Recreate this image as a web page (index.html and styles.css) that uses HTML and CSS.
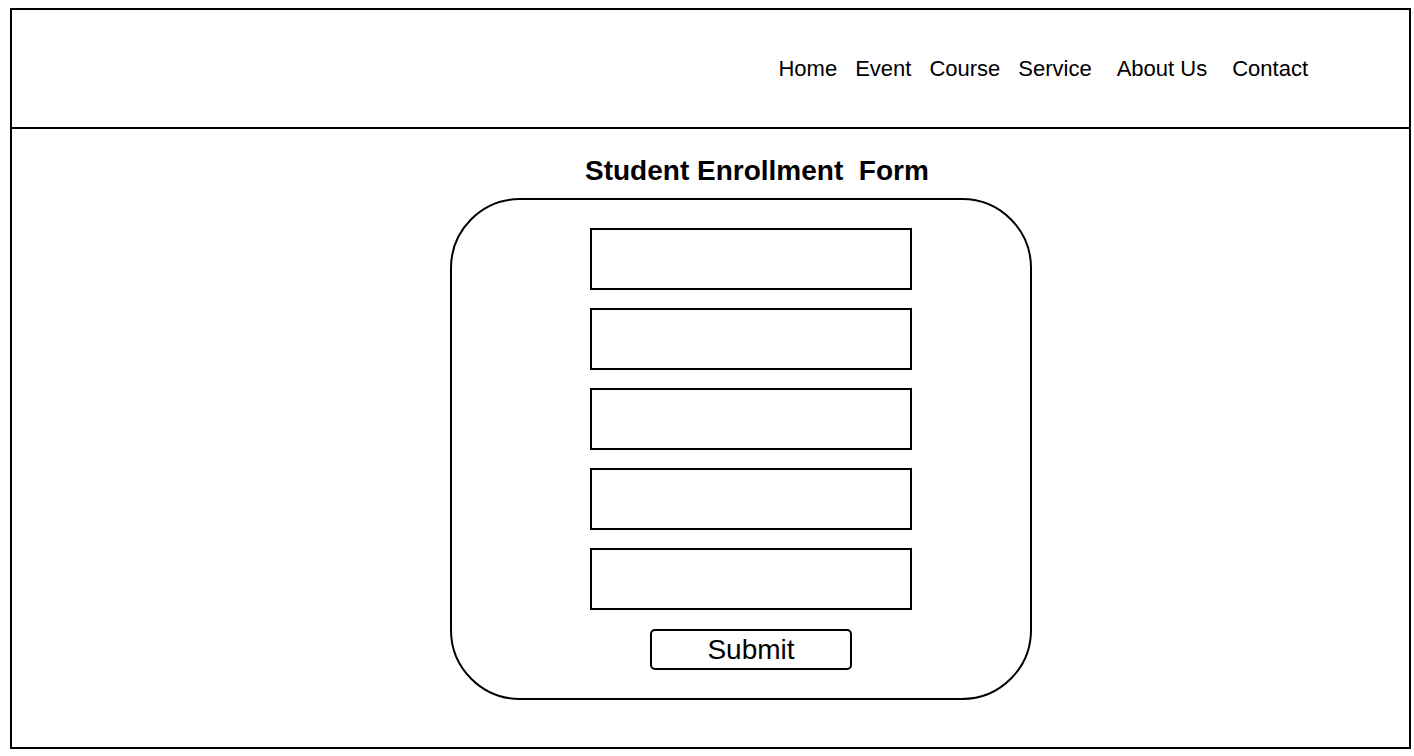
FILE: index.html
```html
<!DOCTYPE html>
<html lang="en">
<head>
<meta charset="utf-8">
<title>Student Enrollment Form</title>
<link rel="stylesheet" href="styles.css">
</head>
<body>
<div class="frame">
  <header class="header">
    <nav class="nav">
      <a class="nav-link" href="#">Home</a>
      <a class="nav-link" href="#">Event</a>
      <a class="nav-link" href="#">Course</a>
      <a class="nav-link" href="#">Service</a>
      <a class="nav-link wide" href="#">About Us</a>
      <a class="nav-link wide" href="#">Contact</a>
    </nav>
  </header>
  <main class="main">
    <h1 class="title">Student Enrollment&nbsp; Form</h1>
    <form class="card">
      <div class="fields">
        <input class="field" type="text" aria-label="Field 1">
        <input class="field" type="text" aria-label="Field 2">
        <input class="field" type="text" aria-label="Field 3">
        <input class="field" type="text" aria-label="Field 4">
        <input class="field" type="text" aria-label="Field 5">
        <button class="submit" type="button">Submit</button>
      </div>
    </form>
  </main>
</div>
</body>
</html>
```

FILE: styles.css
```css
html, body {
  margin: 0;
  padding: 0;
  background: #ffffff;
}

body {
  font-family: "Liberation Sans", Arial, Helvetica, sans-serif;
  color: #000000;
}

.frame {
  box-sizing: border-box;
  width: 1401px;
  height: 741px;
  margin: 8px 0 0 10px;
  border: 2px solid #000000;
  display: flex;
  flex-direction: column;
}

.header {
  box-sizing: border-box;
  height: 119px;
  border-bottom: 2px solid #000000;
  display: flex;
  align-items: center;
  justify-content: flex-end;
  padding-right: 101px;
}

.nav {
  display: flex;
  align-items: center;
  gap: 18px;
}

.nav-link {
  font-size: 22px;
  line-height: 26px;
  color: #000000;
  text-decoration: none;
}

.nav-link.wide {
  margin-left: 7px;
}

.main {
  display: flex;
  flex-direction: column;
  align-items: flex-start;
  padding-left: 438px;
}

.title {
  margin: 26px 0 0 135px;
  font-size: 28px;
  line-height: 32px;
  font-weight: bold;
}

.card {
  box-sizing: border-box;
  width: 582px;
  height: 502px;
  margin: 11px 0 0 0;
  border: 2px solid #000000;
  border-radius: 70px;
  padding: 28px 0 0 138px;
}

.fields {
  width: 322px;
  display: flex;
  flex-direction: column;
  align-items: center;
  gap: 18px;
}

.field {
  box-sizing: border-box;
  display: block;
  width: 322px;
  height: 62px;
  margin: 0;
  padding: 0 10px;
  border: 2px solid #000000;
  border-radius: 0;
  background: #ffffff;
  outline: none;
}

.submit {
  box-sizing: border-box;
  width: 202px;
  height: 41px;
  margin-top: 1px;
  padding: 0;
  border: 2px solid #000000;
  border-radius: 5px;
  background: #ffffff;
  color: #000000;
  font-family: "Liberation Sans", Arial, Helvetica, sans-serif;
  font-size: 28px;
  line-height: 37px;
}
```
